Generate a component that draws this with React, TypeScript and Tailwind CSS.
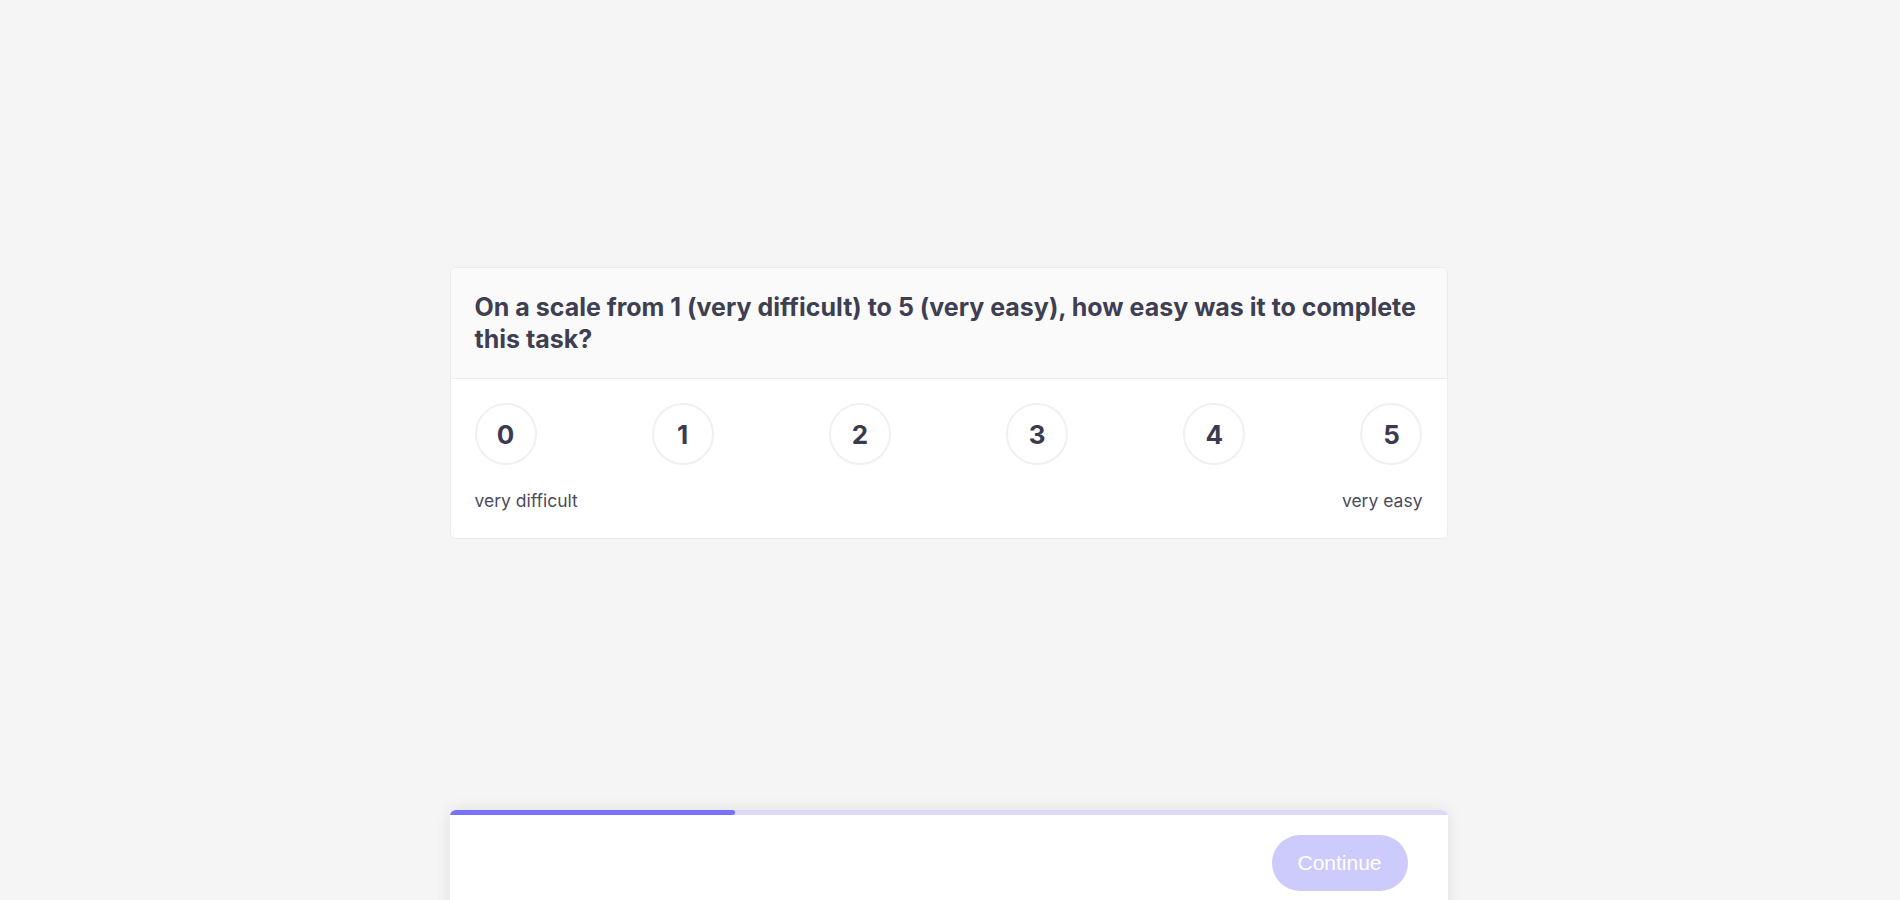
const options = [0, 1, 2, 3, 4, 5];

export default function App() {
  return (
    <div
      className="h-screen overflow-hidden bg-[#f5f5f5] text-[#3f3f50]"
      style={{ fontFamily: "Inter, 'Noto Sans', sans-serif" }}
    >
      {/* Question card */}
      <main className="h-[806px] flex items-center justify-center pr-[3px]">
        <div className="w-[998px] rounded-md border border-[#ececec] bg-white overflow-hidden">
          <div className="bg-[#fafafa] border-b border-[#ececec] pl-6 pr-5 py-[23px]">
            <h2 className="text-[25px] leading-[32px] font-bold text-[#3f3f52]">
              On a scale from 1 (very difficult) to 5 (very easy), how easy was it to complete
              this task?
            </h2>
          </div>
          <div className="px-6 py-6">
            <div className="flex justify-between">
              {options.map((n) => (
                <button
                  key={n}
                  className="w-[62px] h-[62px] rounded-full border-2 border-[#f0f0f0] bg-white flex items-center justify-center text-[26px] font-bold text-[#3b3b4f]"
                >
                  {n}
                </button>
              ))}
            </div>
            <div className="flex justify-between mt-[23px] text-[17.5px] leading-[26px] text-[#4b4b5c]">
              <span>very difficult</span>
              <span>very easy</span>
            </div>
          </div>
        </div>
      </main>

      {/* Footer with progress */}
      <footer className="mt-1 flex justify-center pr-[3px]">
        <div className="w-[998px] bg-white rounded-t-md shadow-[0_0_16px_rgba(0,0,0,0.09)] overflow-hidden">
          <div className="h-[5px] bg-[#dcdafc]">
            <div className="h-full w-[28.57%] bg-[#7772f7] rounded-r-sm" />
          </div>
          <div className="flex justify-end px-10 pt-5 pb-6">
            <button
              className="w-[136px] h-14 rounded-full bg-[#cdcbfc] text-white text-[21px]"
              style={{ fontFamily: "'Liberation Sans', Arial, sans-serif" }}
            >
              Continue
            </button>
          </div>
        </div>
      </footer>
    </div>
  );
}
